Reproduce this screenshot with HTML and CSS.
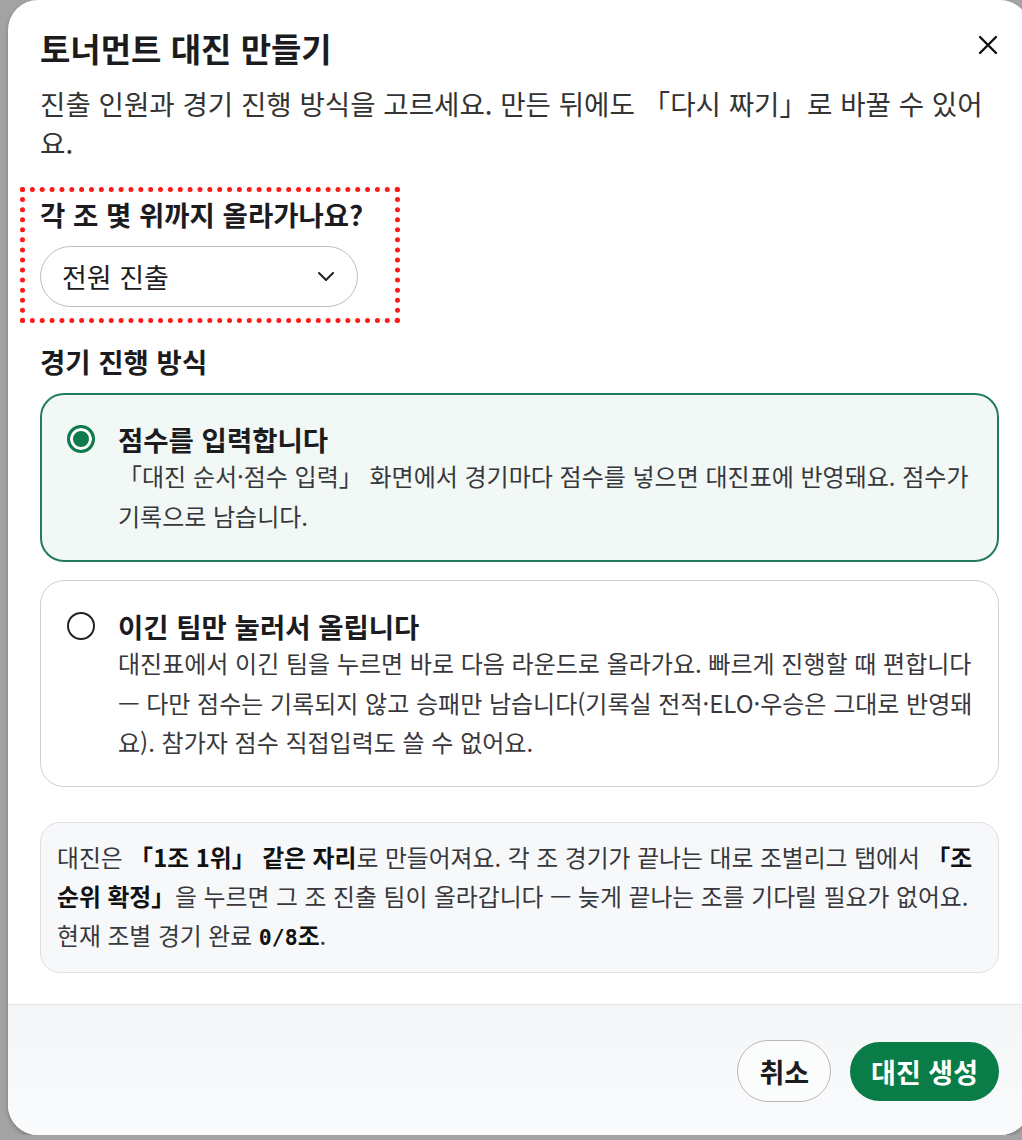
FILE: index.html
```html
<!DOCTYPE html>
<html lang="ko">
<head>
  <meta charset="UTF-8" />
  <meta name="viewport" content="width=device-width, initial-scale=1.0" />
  <title>토너먼트 대진 만들기</title>
  <link rel="stylesheet" href="styles.css">
</head>
<body>
  <div class="dialog">
    <div class="dialog-body">
      <div class="dialog-head">
        <h2 class="dialog-title">토너먼트 대진 만들기</h2>
        <button class="close-btn" aria-label="닫기">
          <svg width="20" height="20" viewBox="0 0 20 20"><path d="M2 2 L18 18 M18 2 L2 18" stroke="#111" stroke-width="2.4" stroke-linecap="round" fill="none"/></svg>
        </button>
      </div>
      <p class="dialog-desc">진출 인원과 경기 진행 방식을 고르세요. 만든 뒤에도 「다시 짜기」로 바꿀 수 있어요.</p>

      <div class="field field-marked">
        <div class="field-label">각 조 몇 위까지 올라가나요?</div>
        <div class="select">
          <span>전원 진출</span>
          <svg width="16" height="9" viewBox="0 0 16 9"><path d="M1 1 L8 8 L15 1" stroke="#222" stroke-width="2" stroke-linecap="round" stroke-linejoin="round" fill="none"/></svg>
        </div>
      </div>

      <div class="section-label">경기 진행 방식</div>
      <div class="options">
        <div class="option option-selected">
          <span class="radio radio-on"></span>
          <div class="option-title">점수를 입력합니다</div>
          <div class="option-text">「대진 순서·점수 입력」 화면에서 경기마다 점수를 넣으면 대진표에 반영돼요. 점수가 기록으로 남습니다.</div>
        </div>
        <div class="option">
          <span class="radio"></span>
          <div class="option-title">이긴 팀만 눌러서 올립니다</div>
          <div class="option-text">대진표에서 이긴 팀을 누르면 바로 다음 라운드로 올라가요. 빠르게 진행할 때 편합니다 — 다만 점수는 기록되지 않고 승패만 남습니다(기록실 전적·ELO·우승은 그대로 반영돼요). 참가자 점수 직접입력도 쓸 수 없어요.</div>
        </div>
      </div>

      <div class="notice">
        대진은 <strong>「1조 1위」 같은 자리</strong>로 만들어져요. 각 조 경기가 끝나는 대로 조별리그 탭에서 <strong>「조 순위 확정」</strong>을 누르면 그 조 진출 팀이 올라갑니다 — 늦게 끝나는 조를 기다릴 필요가 없어요. 현재 조별 경기 완료 <strong><span class="mono">0/8</span>조</strong>.
      </div>
    </div>

    <div class="dialog-foot">
      <button class="btn btn-ghost">취소</button>
      <button class="btn btn-primary">대진 생성</button>
    </div>
  </div>
</body>
</html>
```

FILE: styles.css
```css
body {
  margin: 0;
  padding: 0 0 0 8px;
  background: #a3a3a3;
  font-family: 'Noto Sans CJK KR', 'Noto Sans', sans-serif;
  color: #1c1c1f;
  overflow: hidden;
}
.dialog {
  width: 1022px;
  height: 1135px;
  background: #fff;
  border-radius: 30px;
  box-shadow: 0 2px 4px rgba(0, 0, 0, 0.25);
  display: flex;
  flex-direction: column;
  overflow: hidden;
}
.dialog-body {
  padding: 28px 31px 0 32px;
}
.dialog-head {
  display: flex;
  justify-content: space-between;
  align-items: center;
}
.dialog-title {
  margin: 0;
  font-size: 33px;
  line-height: 40px;
  font-weight: 700;
}
.close-btn {
  border: 0;
  background: none;
  padding: 0;
  margin: -6px 1px 0 0;
  width: 20px;
  height: 20px;
  cursor: pointer;
}
.dialog-desc {
  margin: 16px 0 0;
  font-size: 27.6px;
  line-height: 39px;
  color: #333;
}
.field-marked {
  margin: 25px 0 0 -20px;
  width: 380px;
  box-sizing: border-box;
  border: 5px dotted #ff1a1a;
  padding: 5px 15px 11px;
}
.field-label,
.section-label {
  font-size: 27.5px;
  line-height: 34px;
  font-weight: 700;
}
.select {
  margin-top: 15px;
  width: 318px;
  height: 61px;
  box-sizing: border-box;
  border: 1.5px solid #bdbdc2;
  border-radius: 31px;
  padding: 0 23px 0 21px;
  display: flex;
  justify-content: space-between;
  align-items: center;
  font-size: 27px;
  color: #1c1c1f;
}
.section-label {
  margin-top: 21px;
}
.options {
  margin-top: 15px;
  display: flex;
  flex-direction: column;
  gap: 18px;
}
.option {
  display: grid;
  grid-template-columns: 28px 1fr;
  column-gap: 23px;
  border: 1px solid #cdd0d4;
  border-radius: 24px;
  padding: 28px 24px 24px 26px;
  background: #fff;
}
.option-selected {
  border: 2px solid #237c59;
  background: #f1f8f5;
  padding: 27px 23px 25px 25px;
}
.radio {
  grid-row: 1;
  align-self: center;
  width: 28px;
  height: 28px;
  box-sizing: border-box;
  border: 2px solid #222;
  border-radius: 50%;
  background: #fff;
}
.radio-on {
  border: 3px solid #0f7a4b;
  background: #0f7a4b;
  box-shadow: inset 0 0 0 3px #fff;
}
.option-title {
  font-size: 27.5px;
  line-height: 34px;
  font-weight: 700;
}
.option-text {
  grid-column: 2;
  font-size: 24px;
  line-height: 39.6px;
  color: #38383c;
}
.notice {
  margin-top: 35px;
  border: 1px solid #dcdfe4;
  border-radius: 20px;
  background: #f7f8fa;
  padding: 14px 10px 15px 16px;
  font-size: 23.8px;
  line-height: 39px;
  color: #38383c;
}
.notice strong {
  color: #111;
}
.mono {
  font-family: 'DejaVu Sans Mono', monospace;
  font-size: 21.5px;
}
.dialog-foot {
  margin-top: auto;
  height: 131px;
  box-sizing: border-box;
  border-top: 1px solid #e4e7ea;
  background: linear-gradient(#f3f5f6, #fafbfc);
  display: flex;
  justify-content: flex-end;
  align-items: center;
  gap: 19px;
  padding: 2px 31px 0 0;
}
.btn {
  font-family: inherit;
  font-size: 27px;
  font-weight: 700;
  border-radius: 31px;
  cursor: pointer;
}
.btn-ghost {
  height: 62px;
  padding: 0 21px;
  border: 1.5px solid #b7b7bb;
  background: #fbfcfc;
  color: #1c1c1f;
}
.btn-primary {
  height: 59px;
  padding: 0 21px;
  border: 0;
  background: #097c47;
  color: #fff;
}
```
